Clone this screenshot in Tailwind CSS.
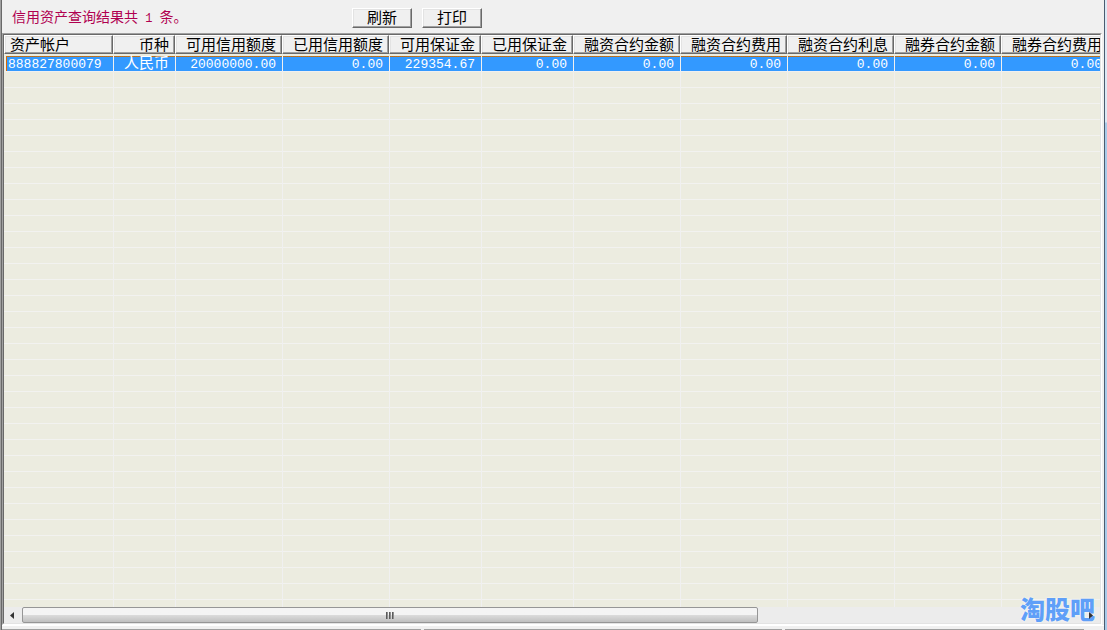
<!DOCTYPE html>
<html lang="zh-CN">
<head>
<meta charset="utf-8">
<title>信用资产查询</title>
<script src="https://cdn.jsdelivr.net/npm/@tailwindcss/browser@4"></script>
</head>
<body class="h-screen overflow-hidden bg-[#f0f0f0] font-['Liberation_Mono','Noto_Sans_CJK_SC',monospace] text-black">
<div class="flex h-full">
  <div class="w-[2px] shrink-0 border-r border-[#696969] bg-[#a0a0a0]"></div>
  <main class="flex min-w-0 flex-1 flex-col">
    <header class="flex h-[33px] shrink-0 items-center pt-[2px] pl-[10px]">
      <p class="w-[340px] shrink-0 font-['Noto_Sans_CJK_SC',sans-serif] text-[14px] leading-[20px] whitespace-pre text-[#b00050]">信用资产查询结果共<span class="font-['Liberation_Mono',monospace] text-[12px]"> 1 </span>条。</p>
      <div class="flex gap-[10px] font-['Noto_Sans_CJK_SC',sans-serif] text-[15px] leading-[16px]">
        <button type="button" class="h-[20px] w-[60px] border border-t-white border-r-[#696969] border-b-[#696969] border-l-white bg-[#f0f0f0] pb-[2px] shadow-[inset_-1px_-1px_0_#a0a0a0,inset_1px_1px_0_#e3e3e3]">刷新</button>
        <button type="button" class="h-[20px] w-[60px] border border-t-white border-r-[#696969] border-b-[#696969] border-l-white bg-[#f0f0f0] pb-[2px] shadow-[inset_-1px_-1px_0_#a0a0a0,inset_1px_1px_0_#e3e3e3]">打印</button>
      </div>
    </header>
    <section class="mr-[2px] flex min-h-0 flex-1 flex-col border border-t-[#a0a0a0] border-r-white border-b-white border-l-[#a0a0a0]">
      <div class="flex min-h-0 flex-1 flex-col border border-t-[#696969] border-r-[#e3e3e3] border-b-[#e3e3e3] border-l-[#696969]">
        <div class="min-h-0 flex-1 overflow-hidden bg-[#ecece0]">
          <table class="h-full w-[1104px] table-fixed border-separate border-spacing-0">
            <colgroup><col class="w-[109px]"><col class="w-[62px]"><col class="w-[107px]"><col class="w-[107px]"><col class="w-[92px]"><col class="w-[92px]"><col class="w-[107px]"><col class="w-[107px]"><col class="w-[107px]"><col class="w-[107px]"><col class="w-[107px]"></colgroup>
            <thead id="head" class="font-['Noto_Sans_CJK_SC',sans-serif] text-[15px] leading-[16px]"></thead>
            <tbody id="body" class="text-[13px] leading-[13px] text-white"></tbody>
          </table>
        </div>
        <div class="flex h-[16px] shrink-0 items-stretch bg-[#ececec]">
          <button type="button" aria-label="向左滚动" class="flex w-[18px] items-center justify-center pr-[2px]"><svg class="h-[7px] w-[4px]" viewBox="0 0 4 7"><path d="M4 0v7L0 3.5z" fill="#333"/></svg></button>
          <div class="flex flex-1">
            <div class="flex w-[736px] items-center justify-center gap-[1px] rounded-[2px] border border-[#969696] bg-linear-to-b from-[#f4f4f4] from-50% via-[#dcdcdc] via-50% to-[#c0c0c0]">
              <span class="h-[7px] w-[2px] bg-linear-to-r from-[#444] to-[#aaa]"></span><span class="h-[7px] w-[2px] bg-linear-to-r from-[#444] to-[#aaa]"></span><span class="h-[7px] w-[2px] bg-linear-to-r from-[#444] to-[#aaa]"></span>
            </div>
          </div>
          <button type="button" aria-label="向右滚动" class="relative z-10 flex w-[18px] items-center justify-center"><svg class="h-[7px] w-[4px]" viewBox="0 0 4 7"><path d="M0 0v7l4-3.5z" fill="#333"/></svg></button>
        </div>
      </div>
    </section>
    <footer class="flex h-[5px] shrink-0 flex-col justify-between">
      <div class="h-[1px] bg-white"></div>
      <div class="flex gap-[3px]"><i class="h-[1px] w-[419px] bg-[#a0a0a0]"></i><i class="h-[1px] w-[358px] bg-[#a0a0a0]"></i><i class="h-[1px] w-[299px] bg-[#a0a0a0]"></i></div>
    </footer>
  </main>
  <div class="flex w-[3px] shrink-0 flex-col border-l border-[#4a5c70] bg-linear-to-b from-[#dce9f6] from-[122px] to-[#a8cbea] to-[123px]"></div>
</div>
<div class="absolute right-[12px] bottom-[9px] font-['Noto_Sans_CJK_SC',sans-serif] text-[25px] leading-[25px] font-black text-[#5f9ff8] [text-shadow:0_0_2px_#fff]">淘股吧</div>
<script>
const names = ['资产帐户','币种','可用信用额度','已用信用额度','可用保证金','已用保证金','融资合约金额','融资合约费用','融资合约利息','融券合约金额','融券合约费用'];
const values = ['888827800079','人民币','20000000.00','0.00','229354.67','0.00','0.00','0.00','0.00','0.00','0.00'];
document.getElementById('head').innerHTML = '<tr>' + names.map((n, i) =>
  `<th scope="col" class="h-[19px] border border-t-white border-r-[#696969] border-b-[#696969] border-l-white bg-[#f0f0f0] p-0 pb-[1px] font-normal whitespace-nowrap shadow-[inset_-1px_-1px_0_#a0a0a0,inset_1px_1px_0_#e3e3e3] ${i ? 'pr-[5px] text-right' : 'pl-[5px] text-left'}">${n}</th>`).join('') + '</tr>';
document.getElementById('body').innerHTML = '<tr aria-hidden="true"><td colspan="11" class="h-[2px] p-0"></td></tr><tr>' + values.map((v, i) =>
  `<td class="h-[16px] border-b border-[#f0f0f0] bg-[#3399ff] bg-[repeating-linear-gradient(90deg,#d96a00_0px,#d96a00_1px,#8f7a50_1px,#8f7a50_2px)] bg-[length:100%_1px] bg-no-repeat p-0 pt-[2px] whitespace-nowrap ${i ? 'border-l pr-[6px] text-right' : 'border-l-2 border-l-[#ecece0] pl-[2px] text-left shadow-[inset_1px_0_0_#d96a00]'} ${i === 1 ? 'text-[15px] leading-[13px]' : ''}">${v}</td>`).join('') + '</tr><tr aria-hidden="true">' + names.map((n, i) =>
  `<td class="bg-[repeating-linear-gradient(to_bottom,transparent_0px,transparent_15px,#f2f2f0_15px,#f2f2f0_16px)] ${i ? 'border-l border-[#f0f0f0]' : ''}"></td>`).join('') + '</tr>';
</script>
</body>
</html>
